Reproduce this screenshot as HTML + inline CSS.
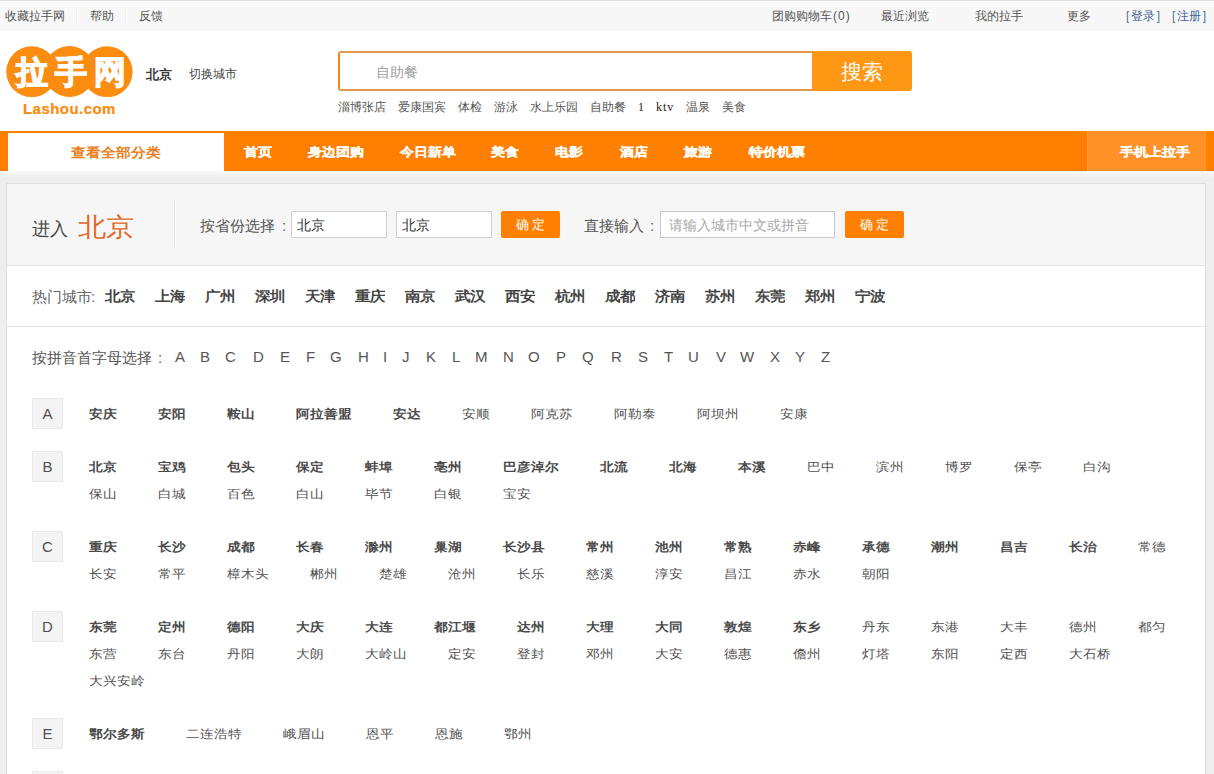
<!DOCTYPE html>
<html><head><meta charset="utf-8">
<style>
*{margin:0;padding:0;box-sizing:border-box}
html,body{width:1214px;height:774px;overflow:hidden;background:#fff;font-family:"Liberation Sans",sans-serif;color:#333}
.a{position:absolute;white-space:nowrap}
#top{position:absolute;left:0;top:0;width:1214px;height:31px;background:linear-gradient(#fcfcfc 1px,#f8f8f8 6px,#f7f7f7 24px,#f9f9f9 31px);border-top:1px solid #dedede}
.t12{font-size:12px;line-height:12px;color:#555}
.sep{position:absolute;top:8px;width:2px;height:16px;border-left:1px solid #efefef;border-right:1px solid #fdfdfd}
#nav{position:absolute;left:0;top:131px;width:1214px;height:40px;background:#ff7f00;border-bottom:1px solid #e97a12}
.nv{position:absolute;top:146px;-webkit-text-stroke:0.3px #fff;transform:scaleY(0.86);transform-origin:0 0;font-size:14px;line-height:14px;font-weight:bold;color:#fff;white-space:nowrap}
#gray{position:absolute;left:0;top:171px;width:1214px;height:603px;background:linear-gradient(#f8f8f8 0px,#ededed 7px,#eeeeee 12px)}
#box{position:absolute;left:6px;top:183px;width:1200px;height:700px;background:#fff;border:1px solid #dedede}
#hd{position:absolute;left:7px;top:184px;width:1198px;height:82px;background:#f6f6f6;border-bottom:1px solid #e6e6e6}
.sel{position:absolute;top:211px;height:27px;background:#fff;border:1px solid #cfcfcf}
.btn{position:absolute;top:211px;height:27px;background:#ff7f00;border-radius:2px;color:#fff;font-size:12.5px;line-height:28px;text-align:center;letter-spacing:3.2px;text-indent:4px}
.hc{position:absolute;top:289px;font-size:15px;line-height:15px;font-weight:bold;color:#444;transform:scaleY(0.9)}
.lt{position:absolute;top:349px;font-size:15px;line-height:15px;color:#555;font-family:"Liberation Sans",sans-serif}
.lb{position:absolute;left:32px;width:31px;height:31px;background:#f4f4f4;border:1px solid #eaeaea;font-size:15px;line-height:29px;text-align:center;color:#505050}
.row{position:absolute;left:89px;height:27px;white-space:nowrap;padding-top:1px}
.row span{float:left;margin-right:41px;font-size:14px;line-height:27px;color:#505050;transform:scaleY(0.88)}
.row span.b{font-weight:bold;color:#4a4a4a}
</style></head><body>

<div id="top"></div>
<div class="a t12" style="left:5px;top:10px">收藏拉手网</div>
<div class="sep" style="left:76px"></div>
<div class="a t12" style="left:90px;top:10px">帮助</div>
<div class="sep" style="left:125px"></div>
<div class="a t12" style="left:139px;top:10px">反馈</div>
<div class="a t12" style="left:772px;top:10px">团购购物车<span style="letter-spacing:1px;margin-left:1px">(0)</span></div>
<div class="a t12" style="left:881px;top:10px">最近浏览</div>
<div class="a t12" style="left:975px;top:10px">我的拉手</div>
<div class="a t12" style="left:1067px;top:10px">更多</div>
<div class="a t12" style="left:1126px;top:10px;color:#5a6f96">[<span style="margin:0 1.5px 0 1.8px;color:#46639b">登录</span>]</div>
<div class="a t12" style="left:1172px;top:10px;color:#5a6f96">[<span style="margin:0 1.5px 0 1.8px;color:#46639b">注册</span>]</div>

<!-- logo -->
<svg class="a" style="left:0;top:40px" width="140" height="84" viewBox="0 40 140 84">
  <circle cx="31.7" cy="71.7" r="25.4" fill="#fa8c10"/>
  <circle cx="69.5" cy="71.5" r="25.4" fill="#fa8c10"/>
  <circle cx="107.2" cy="71.7" r="25.4" fill="#fa8c10"/>
</svg>
<div class="a" style="left:16px;top:56px;font-size:32px;line-height:32px;font-weight:bold;color:#fff;letter-spacing:7px;-webkit-text-stroke:1.3px #fff">拉手网</div>
<div class="a" style="left:23px;top:101px;font-size:15px;line-height:15px;font-weight:bold;color:#fa8c10;letter-spacing:0.45px;-webkit-text-stroke:0.2px #fa8c10">Lashou.com</div>

<div class="a" style="left:146px;top:68px;font-size:13px;line-height:14px;font-weight:bold;color:#383838">北京</div>
<div class="a t12" style="left:189px;top:68px;color:#444">切换城市</div>

<!-- search -->
<div class="a" style="left:338px;top:51px;width:475px;height:40px;border:2px solid #e39a4c;border-left-color:#f08a1a;border-right:none;border-radius:3px 0 0 3px;background:#fff"></div>
<div class="a" style="left:376px;top:65px;font-size:14px;line-height:14px;color:#a0a0a0">自助餐</div>
<div class="a" style="left:812px;top:51px;width:100px;height:40px;background:#fe9714;border-radius:0 3px 3px 0;color:#fff;font-size:20.5px;line-height:42px;text-align:center;text-indent:-1px">搜索</div>

<div class="a t12" style="left:338px;top:101px">淄博张店</div>
<div class="a t12" style="left:398px;top:101px">爱康国宾</div>
<div class="a t12" style="left:458px;top:101px">体检</div>
<div class="a t12" style="left:494px;top:101px">游泳</div>
<div class="a t12" style="left:530px;top:101px">水上乐园</div>
<div class="a t12" style="left:590px;top:101px">自助餐</div>
<div class="a t12" style="left:638px;top:101px;font-family:'Liberation Serif',serif;font-size:12px;color:#222">1</div>
<div class="a t12" style="left:656px;top:101px;font-family:'Liberation Serif',serif;font-size:12px;color:#222;letter-spacing:1px">ktv</div>
<div class="a t12" style="left:686px;top:101px">温泉</div>
<div class="a t12" style="left:722px;top:101px">美食</div>

<!-- nav -->
<div id="nav"></div>
<div class="a" style="left:8px;top:133px;width:216px;height:38px;background:#fff"></div>
<div class="a" style="left:71px;top:146px;font-size:15px;line-height:15px;font-weight:bold;color:#ec8020;transform:scaleY(0.88);transform-origin:0 0">查看全部分类</div>
<div class="nv" style="left:244px">首页</div>
<div class="nv" style="left:308px">身边团购</div>
<div class="nv" style="left:400px">今日新单</div>
<div class="nv" style="left:491px">美食</div>
<div class="nv" style="left:555px">电影</div>
<div class="nv" style="left:620px">酒店</div>
<div class="nv" style="left:684px">旅游</div>
<div class="nv" style="left:749px">特价机票</div>
<div class="a" style="left:1087px;top:131px;width:119px;height:40px;background:#ff9128;border-left:1px solid #ffa040;border-right:1px solid #ffa040"></div>
<div class="nv" style="left:1120px">手机上拉手</div>

<!-- content -->
<div id="gray"></div>
<div id="box"></div>
<div id="hd"></div>
<div class="a" style="left:32px;top:220px;font-size:18px;line-height:18px;color:#444">进入</div>
<div class="a" style="left:78px;top:213px;font-size:28px;line-height:28px;color:#de6a2a;transform:scaleY(0.92);transform-origin:0 100%">北京</div>
<div class="a" style="left:174px;top:200px;width:2px;height:48px;border-left:1px solid #e0e0e0;border-right:1px solid #fff"></div>
<div class="a" style="left:200px;top:218px;font-size:15px;line-height:15px;color:#555">按省份选择</div><div class="a" style="left:282px;top:218px;font-size:15px;line-height:15px;color:#555">:</div>
<div class="sel" style="left:291px;width:96px"></div>
<div class="a" style="left:297px;top:218px;font-size:14px;line-height:14px;color:#333">北京</div>
<div class="sel" style="left:396px;width:96px"></div>
<div class="a" style="left:402px;top:218px;font-size:14px;line-height:14px;color:#333">北京</div>
<div class="btn" style="left:501px;width:59px">确定</div>
<div class="a" style="left:584px;top:218px;font-size:15px;line-height:15px;color:#555">直接输入</div><div class="a" style="left:650px;top:218px;font-size:15px;line-height:15px;color:#555">:</div>
<div class="sel" style="left:660px;width:175px;border-color:#c9c9c9"></div>
<div class="a" style="left:669px;top:218px;font-size:14px;line-height:14px;color:#a8a8a8">请输入城市中文或拼音</div>
<div class="btn" style="left:845px;width:59px">确定</div>

<div class="a" style="left:7px;top:326px;width:1198px;height:1px;background:#e6e6e6"></div>
<div class="a" style="left:32px;top:289px;font-size:15px;line-height:15px;color:#666">热门城市</div><div class="a" style="left:91px;top:289px;font-size:15px;line-height:15px;color:#666">:</div>
<div class="hc" style="left:105px">北京</div>
<div class="hc" style="left:155px">上海</div>
<div class="hc" style="left:205px">广州</div>
<div class="hc" style="left:255px">深圳</div>
<div class="hc" style="left:305px">天津</div>
<div class="hc" style="left:355px">重庆</div>
<div class="hc" style="left:405px">南京</div>
<div class="hc" style="left:455px">武汉</div>
<div class="hc" style="left:505px">西安</div>
<div class="hc" style="left:555px">杭州</div>
<div class="hc" style="left:605px">成都</div>
<div class="hc" style="left:655px">济南</div>
<div class="hc" style="left:705px">苏州</div>
<div class="hc" style="left:755px">东莞</div>
<div class="hc" style="left:805px">郑州</div>
<div class="hc" style="left:855px">宁波</div>

<div class="a" style="left:32px;top:350px;font-size:15px;line-height:15px;color:#555">按拼音首字母选择</div><div class="a" style="left:158px;top:350px;font-size:15px;line-height:15px;color:#555">:</div>
<div class="lt" style="left:175px">A</div>
<div class="lt" style="left:200px">B</div>
<div class="lt" style="left:225px">C</div>
<div class="lt" style="left:253px">D</div>
<div class="lt" style="left:280px">E</div>
<div class="lt" style="left:306px">F</div>
<div class="lt" style="left:330px">G</div>
<div class="lt" style="left:358px">H</div>
<div class="lt" style="left:383px">I</div>
<div class="lt" style="left:402px">J</div>
<div class="lt" style="left:426px">K</div>
<div class="lt" style="left:452px">L</div>
<div class="lt" style="left:475px">M</div>
<div class="lt" style="left:503px">N</div>
<div class="lt" style="left:528px">O</div>
<div class="lt" style="left:556px">P</div>
<div class="lt" style="left:582px">Q</div>
<div class="lt" style="left:611px">R</div>
<div class="lt" style="left:638px">S</div>
<div class="lt" style="left:664px">T</div>
<div class="lt" style="left:688px">U</div>
<div class="lt" style="left:716px">V</div>
<div class="lt" style="left:740px">W</div>
<div class="lt" style="left:770px">X</div>
<div class="lt" style="left:795px">Y</div>
<div class="lt" style="left:821px">Z</div>

<!-- A -->
<div class="lb" style="top:398px">A</div>
<div class="row" style="top:400px"><span class="b">安庆</span><span class="b">安阳</span><span class="b">鞍山</span><span class="b">阿拉善盟</span><span class="b">安达</span><span>安顺</span><span>阿克苏</span><span>阿勒泰</span><span>阿坝州</span><span>安康</span></div>
<!-- B -->
<div class="lb" style="top:451px">B</div>
<div class="row" style="top:453px"><span class="b">北京</span><span class="b">宝鸡</span><span class="b">包头</span><span class="b">保定</span><span class="b">蚌埠</span><span class="b">亳州</span><span class="b">巴彦淖尔</span><span class="b">北流</span><span class="b">北海</span><span class="b">本溪</span><span>巴中</span><span>滨州</span><span>博罗</span><span>保亭</span><span>白沟</span></div>
<div class="row" style="top:480px"><span>保山</span><span>白城</span><span>百色</span><span>白山</span><span>毕节</span><span>白银</span><span>宝安</span></div>
<!-- C -->
<div class="lb" style="top:531px">C</div>
<div class="row" style="top:533px"><span class="b">重庆</span><span class="b">长沙</span><span class="b">成都</span><span class="b">长春</span><span class="b">滁州</span><span class="b">巢湖</span><span class="b">长沙县</span><span class="b">常州</span><span class="b">池州</span><span class="b">常熟</span><span class="b">赤峰</span><span class="b">承德</span><span class="b">潮州</span><span class="b">昌吉</span><span class="b">长治</span><span>常德</span></div>
<div class="row" style="top:560px"><span>长安</span><span>常平</span><span>樟木头</span><span>郴州</span><span>楚雄</span><span>沧州</span><span>长乐</span><span>慈溪</span><span>淳安</span><span>昌江</span><span>赤水</span><span>朝阳</span></div>
<!-- D -->
<div class="lb" style="top:611px">D</div>
<div class="row" style="top:613px"><span class="b">东莞</span><span class="b">定州</span><span class="b">德阳</span><span class="b">大庆</span><span class="b">大连</span><span class="b">都江堰</span><span class="b">达州</span><span class="b">大理</span><span class="b">大同</span><span class="b">敦煌</span><span class="b">东乡</span><span>丹东</span><span>东港</span><span>大丰</span><span>德州</span><span>都匀</span></div>
<div class="row" style="top:640px"><span>东营</span><span>东台</span><span>丹阳</span><span>大朗</span><span>大岭山</span><span>定安</span><span>登封</span><span>邓州</span><span>大安</span><span>德惠</span><span>儋州</span><span>灯塔</span><span>东阳</span><span>定西</span><span>大石桥</span></div>
<div class="row" style="top:667px"><span>大兴安岭</span></div>
<!-- E -->
<div class="lb" style="top:718px">E</div>
<div class="row" style="top:720px"><span class="b">鄂尔多斯</span><span>二连浩特</span><span>峨眉山</span><span>恩平</span><span>恩施</span><span>鄂州</span></div>
<!-- F -->
<div class="lb" style="top:771px">F</div>

</body></html>
